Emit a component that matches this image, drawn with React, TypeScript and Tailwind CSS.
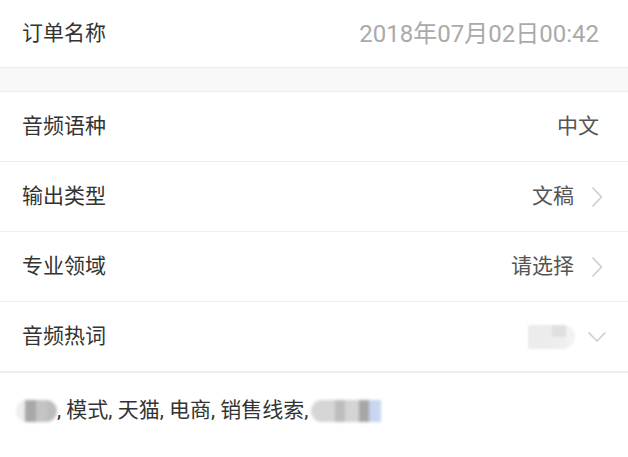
import React from "react";

const font = { fontFamily: '"Roboto", "Noto Sans CJK SC", sans-serif' };

function ChevronRight() {
  return (
    <svg width="12" height="22" viewBox="0 0 12 22" className="ml-[17px] mr-[-1px]">
      <path d="M1.5 1.5 L10.5 11 L1.5 20.5" fill="none" stroke="#cccccc" strokeWidth="1.5" />
    </svg>
  );
}

function ChevronDown() {
  return (
    <svg width="20" height="12" viewBox="0 0 20 12" className="ml-[12px] mr-[-5px]">
      <path d="M1.5 1.5 L10 10 L18.5 1.5" fill="none" stroke="#cccccc" strokeWidth="1.5" />
    </svg>
  );
}

function Row({ label, children, last }: { label: string; children?: React.ReactNode; last?: boolean }) {
  return (
    <div className={`flex h-[70px] items-center justify-between pl-[22px] pr-[26px] ${last ? "" : "border-b border-[#eeeeee]"}`}>
      <span className="text-[21px] text-[#333333]">{label}</span>
      <div className="flex items-center">{children}</div>
    </div>
  );
}

export default function App() {
  return (
    <div className="w-[628px] h-[457px] bg-white overflow-hidden" style={font}>
      <div className="flex h-[68px] items-center justify-between border-b border-[#ececec] pl-[22px] pr-[29px]">
        <span className="text-[21px] text-[#333333]">订单名称</span>
        <span className="text-[24px] text-[#aaaaaa]">2018年07月02日00:42</span>
      </div>
      <div className="h-[24px] bg-[#f8f8f8] border-b border-[#ececec]" />
      <Row label="音频语种">
        <span className="mr-[3px] text-[21px] text-[#555555]">中文</span>
      </Row>
      <Row label="输出类型">
        <span className="text-[21px] text-[#555555]">文稿</span>
        <ChevronRight />
      </Row>
      <Row label="专业领域">
        <span className="text-[21px] text-[#555555]">请选择</span>
        <ChevronRight />
      </Row>
      <Row label="音频热词">
        <div className="flex h-[24px] w-[47px] overflow-hidden rounded-r-full blur-[1px]">
          <div className="w-[24px] bg-[#ececec]" />
          <div className="flex w-[14px] flex-col">
            <div className="h-[12px] bg-[#e0e0e0]" />
            <div className="h-[12px] bg-[#eeeeee]" />
          </div>
          <div className="w-[9px] bg-[#f2f2f2]" />
        </div>
        <ChevronDown />
      </Row>
      <div className="flex items-center border-t border-[#eeeeee] pl-[16px] pt-[22px] text-[21px] text-[#333333]">
        <div className="flex h-[22px] w-[41px] overflow-hidden rounded-full blur-[1.5px]">
          <div className="w-[9px] bg-[#eeeeee]" />
          <div className="w-[11px] bg-[#a8a8a8]" />
          <div className="w-[11px] bg-[#c4c4c4]" />
          <div className="w-[10px] bg-[#bdbdbd]" />
        </div>
        <span>, 模式, 天猫, 电商, 销售线索,</span>
        <div className="ml-[2px] flex h-[22px] w-[70px] overflow-hidden rounded-l-full blur-[1.5px]">
          <div className="w-[24px] bg-[#d6d6d6]" />
          <div className="w-[10px] bg-[#bdbdbd]" />
          <div className="w-[14px] bg-[#d4d4d4]" />
          <div className="w-[10px] bg-[#a6a6a6]" />
          <div className="w-[12px] bg-[#c8d6f2]" />
        </div>
      </div>
    </div>
  );
}
